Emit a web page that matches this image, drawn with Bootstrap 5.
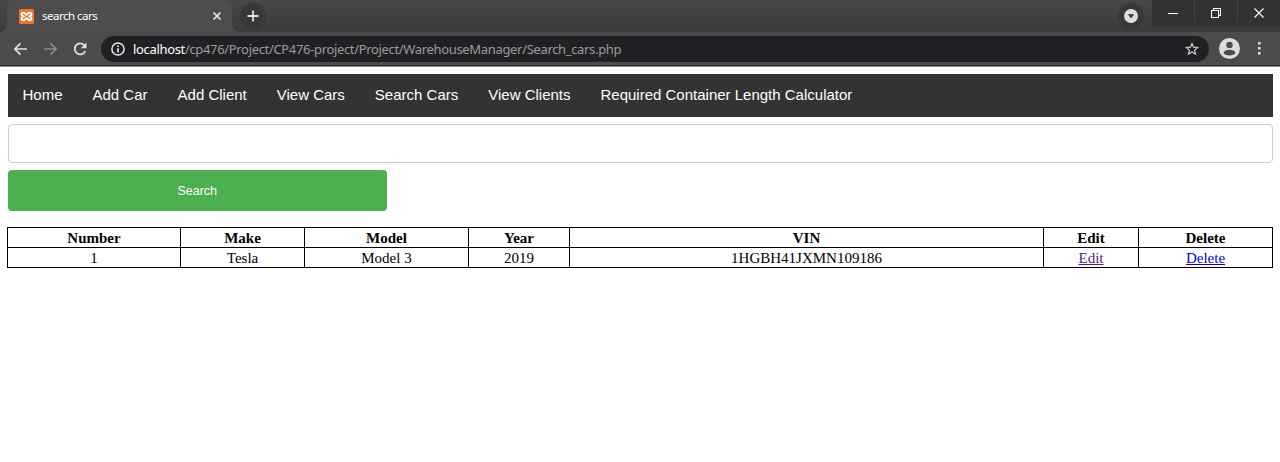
<!DOCTYPE html>
<html lang="en">
<head>
<meta charset="utf-8">
<title>search cars</title>
<link rel="stylesheet" href="https://cdn.jsdelivr.net/npm/bootstrap@5.3.0/dist/css/bootstrap.min.css">
<style>
body{background:#fff;color:#000;overflow:hidden;font-family:"Liberation Serif",serif;font-size:15px}
svg{display:block;flex:none}
.tabstrip{height:32px;background:linear-gradient(#474747,#3b3b3b)}
.browser-tab{width:225px;height:32px;margin-left:7px;padding:0 9px 0 12px;background:#4d4d4d;border-radius:7px 7px 0 0;font:11.5px "Noto Sans",sans-serif;color:#fff;position:relative}
.browser-tab::before,.browser-tab::after{content:"";position:absolute;bottom:0;width:7px;height:7px}
.browser-tab::before{left:-7px;background:radial-gradient(circle at 0 0,transparent 6.5px,#4d4d4d 7px)}
.browser-tab::after{right:-7px;background:radial-gradient(circle at 100% 0,transparent 6.5px,#4d4d4d 7px)}
.title{letter-spacing:-.5px;padding-bottom:1px}
.url{letter-spacing:-.335px}
.round{width:26px;height:26px;background:#383838}
.winctl{width:42px;height:27px;background:#323232;margin-left:1px}
.winctl svg{margin-top:-1px}
.toolbar{height:35px;padding:0 13px 1px 13px;background:#4b4b4b;border-bottom:1px solid #8b8b8b;box-shadow:inset 0 -1px #292929}
.omnibox{height:26px;width:1108px;margin-left:12px;padding:0 10px;background:#202124;font:13px "Noto Sans",sans-serif;color:#9a9b9d}
.omnibox b{font-weight:400;color:#fff}
.page{padding:7px 7.5px}
.menu{height:43px;background:#333;font-family:"Liberation Sans",sans-serif}
.menu .nav-link{color:#fff;padding:0 15px;line-height:42px}
.query{height:39px;margin-top:7px;border:1px solid #ccc;border-radius:4px;padding:0 12px}
.query:focus{border-color:#ccc;box-shadow:none}
.go{width:379.5px;height:41px;margin-top:7px;background:#4caf50;border:0;border-radius:4px;color:#fff;font:12.5px "Liberation Sans",sans-serif}
.cars{margin:16px 0 0 -.5px;width:1265px;table-layout:fixed;border-collapse:collapse;line-height:17px;text-align:center}
.cars th,.cars td{height:20px;padding:2px 0 0;border:1px solid #000;text-align:center}
.cars a{color:#00e}
.cars a.seen{color:#551a8b}
</style>
</head>
<body>
<header>
<div class="tabstrip d-flex">
  <div class="browser-tab d-flex align-items-center">
    <svg width="15" height="15" viewBox="0 0 15 15"><rect width="15" height="15" rx="1.5" fill="#f27324"/><path d="M5 3.800C1.800 3.300 2 6.300 4.200 7.500 2 8.700 1.800 11.700 5 11.200 6.600 11 6.300 9.300 7.500 9.300S8.400 11 10 11.200C13.200 11.700 13 8.700 10.800 7.500 13 6.300 13.200 3.300 10 3.800 8.400 4 8.700 5.700 7.500 5.700S6.600 4 5 3.800Z" fill="none" stroke="#fff" stroke-width="2"/></svg>
    <span class="title ms-2">search cars</span>
    <svg class="ms-auto" width="12" height="12" viewBox="0 0 12 12"><path d="M2.500 2.500l7 7M9.500 2.500l-7 7" stroke="#eee" stroke-width="1.600"/></svg>
  </div>
  <div class="round rounded-circle d-flex align-items-center justify-content-center ms-2" style="margin-top:3px">
    <svg width="12" height="12"><path d="M6 .5v11M.5 6h11" stroke="#e2e2e2" stroke-width="1.800"/></svg>
  </div>
  <div class="ms-auto d-flex">
    <div class="round rounded-circle d-flex align-items-center justify-content-center me-2" style="margin-top:3px">
      <svg width="14" height="14"><circle cx="7" cy="7" r="7" fill="#ddd"/><path d="M3.800 5.200h6.400L7 9.300z" fill="#333"/></svg>
    </div>
    <div class="winctl d-flex align-items-center justify-content-center ms-0"><svg width="10" height="10"><path d="M0 5.500h10" stroke="#fff"/></svg></div>
    <div class="winctl d-flex align-items-center justify-content-center"><svg width="10" height="10"><path d="M.5 2.500h7v7h-7zM2.500 2.500v-2h7v7h-2" fill="none" stroke="#fff" stroke-width="1.100"/></svg></div>
    <div class="winctl d-flex align-items-center justify-content-center"><svg width="10" height="10"><path d="M.5.5l9 9M9.500.5l-9 9" stroke="#fff" stroke-width="1.100"/></svg></div>
  </div>
</div>
<div class="toolbar d-flex align-items-center">
  <svg width="15" height="14" fill="none" stroke="#e2e2e2" stroke-width="1.700"><path d="M14 7H2M7.500 1.300L1.800 7l5.700 5.700"/></svg>
  <svg style="margin-left:15px" width="15" height="14" fill="none" stroke="#8b8b8b" stroke-width="1.700"><path d="M1 7h12M7.500 1.300L13.200 7l-5.700 5.700"/></svg>
  <svg style="margin-left:15px" width="15" height="14" viewBox="0 0 15 14"><path d="M12.300 9A5.500 5.500 0 1 1 11.500 3.400" fill="none" stroke="#e2e2e2" stroke-width="1.800"/><path d="M13.500.6v5.700H7.800z" fill="#e2e2e2"/></svg>
  <div class="omnibox rounded-pill d-flex align-items-center" style="margin-left:13px">
    <svg width="14" height="14" fill="none" stroke="#e8e8e8" stroke-width="1.500"><circle cx="7" cy="7" r="6.100"/><path d="M7 6.200v4.300M7 3.400v1.600" stroke-width="1.700"/></svg>
    <span class="url ms-2 text-nowrap"><b>localhost</b>/cp476/Project/CP476-project/Project/WarehouseManager/Search_cars.php</span>
    <svg class="ms-auto" width="14" height="14" viewBox="0 0 14 14"><path d="M7 1.500l1.600 3.700 4 .35-3 2.650.9 3.900L7 10.050 3.500 12.100l.9-3.900-3-2.650 4-.35z" fill="none" stroke="#ccc" stroke-width="1.200"/></svg>
  </div>
  <svg style="margin-left:10px" width="21" height="21" viewBox="0 0 21 21"><circle cx="10.500" cy="10.500" r="10.500" fill="#ddd"/><circle cx="10.500" cy="6.900" r="3.200" fill="#4b4b4b"/><path d="M4.500 14.800c1-4 11-4 12 0-1.500 3.600-10.500 3.600-12 0z" fill="#4b4b4b"/></svg>
  <svg class="ms-auto" style="margin-right:6px" width="3" height="13" fill="#ddd"><rect width="2.600" height="2.600"/><rect y="5" width="2.600" height="2.600"/><rect y="10" width="2.600" height="2.600"/></svg>
</div>
</header>
<main class="page">
  <nav class="menu nav flex-nowrap">
    <a class="nav-link" href="#">Home</a><a class="nav-link" href="#">Add Car</a><a class="nav-link" href="#">Add Client</a><a class="nav-link" href="#">View Cars</a><a class="nav-link" href="#">Search Cars</a><a class="nav-link" href="#">View Clients</a><a class="nav-link" href="#">Required Container Length Calculator</a>
  </nav>
  <form>
    <input class="query form-control" type="text" aria-label="Search">
    <button class="go d-block" type="button">Search</button>
  </form>
  <table class="cars">
    <colgroup><col style="width:173px"><col style="width:124px"><col style="width:164px"><col style="width:101px"><col style="width:474px"><col style="width:95px"><col style="width:134px"></colgroup>
    <tr><th>Number</th><th>Make</th><th>Model</th><th>Year</th><th>VIN</th><th>Edit</th><th>Delete</th></tr>
    <tr><td>1</td><td>Tesla</td><td>Model 3</td><td>2019</td><td>1HGBH41JXMN109186</td><td><a class="seen" href="#">Edit</a></td><td><a href="#">Delete</a></td></tr>
  </table>
</main>
<script src="https://cdn.jsdelivr.net/npm/bootstrap@5.3.0/dist/js/bootstrap.bundle.min.js"></script>
</body>
</html>
